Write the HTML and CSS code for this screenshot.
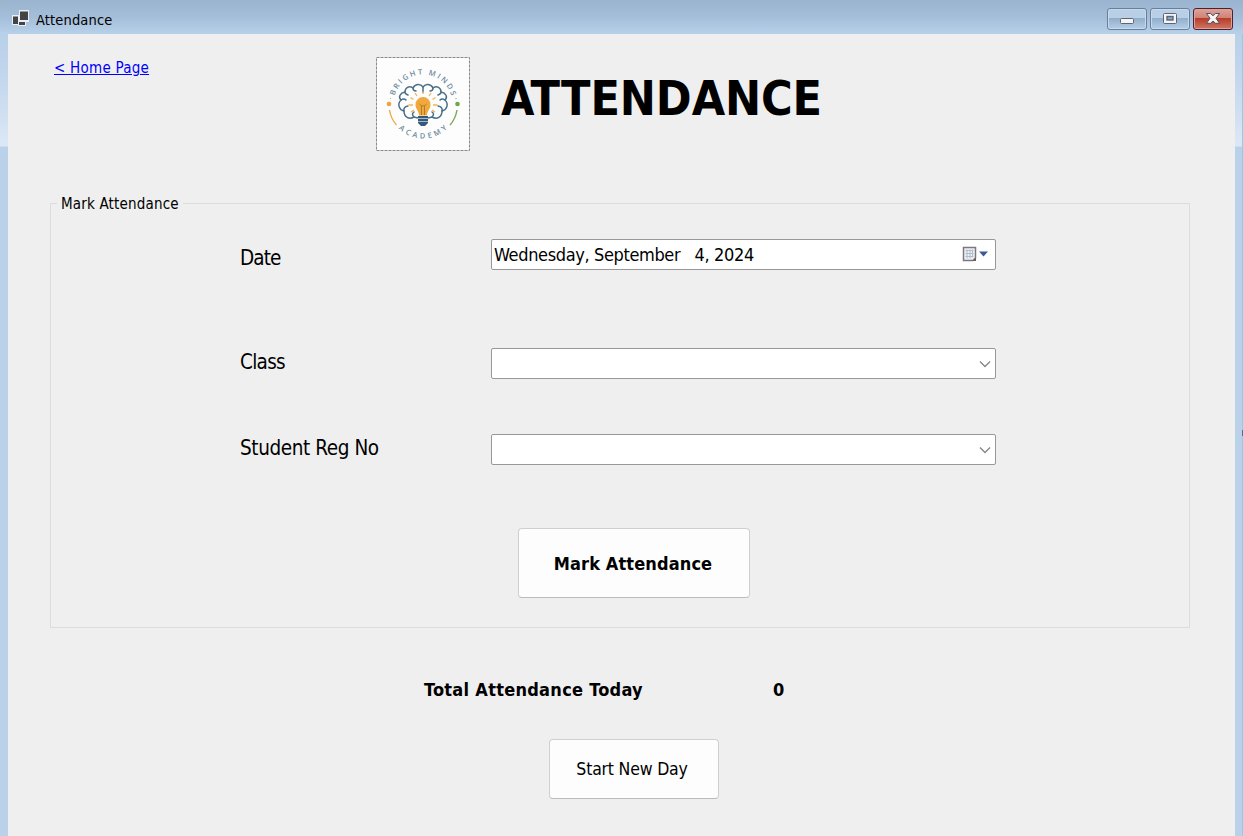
FILE: index.html
```html
<!DOCTYPE html>
<html lang="en">
<head>
<meta charset="utf-8">
<title>Attendance</title>
<link rel="stylesheet" href="styles.css">
</head>
<body>
<div class="window">
  <header class="titlebar">
    <svg class="app-icon" width="18" height="17" viewBox="0 0 18 17">
      <path d="M7 0h10v12h-3v4H6v-1H0V5h7z" fill="#e9eef4"/>
      <path d="M8 1.500h8v8.500H8zM1 6.500h5V14H1zM7 12h6v3H7z" fill="#444"/>
    </svg>
    <span class="title">Attendance</span>
    <div class="controls">
      <button class="control" aria-label="Minimize"><svg width="38" height="21" viewBox="0 0 38 21"><rect x="12.500" y="9.500" width="13" height="5" rx="1" fill="#f4f4f4" stroke="#5c6577"/></svg></button>
      <button class="control" aria-label="Maximize"><svg width="38" height="21" viewBox="0 0 38 21"><rect x="12.500" y="4.500" width="13" height="10" rx="1" fill="#f4f4f4" stroke="#5c6577"/><rect x="16" y="7.500" width="6" height="3.500" fill="#8ea9c6" stroke="#5c6577" stroke-width="1.400"/></svg></button>
      <button class="control close" aria-label="Close"><svg width="38" height="21" viewBox="0 0 38 21"><path d="M12.500 4.500h4l2.500 2.200 2.500-2.200h4L22 9.300l3.500 5h-4L19 12.100l-2.500 2.200h-4l3.500-5z" fill="#f4f4f4" stroke="#5b4b5c"/></svg></button>
    </div>
  </header>
  <main class="client">
    <div class="masthead">
      <a class="home" href="#">&lt; Home Page</a>
      <div class="logo">
        <svg width="94" height="94" viewBox="0 0 94 94">
          <rect x=".5" y=".5" width="93" height="93" fill="#fdfdfd" stroke="#888" stroke-dasharray="3 1"/>
          <defs>
            <path id="arcTop" d="M17.500 47a29.500 29.500 0 0 1 59 0"/>
            <path id="arcBottom" d="M12.500 47a34.500 34.500 0 0 0 69 0"/>
          </defs>
          <text class="logo-text"><textPath href="#arcTop" startOffset="50%" text-anchor="middle" textLength="76">BRIGHT MINDS</textPath></text>
          <text class="logo-text"><textPath href="#arcBottom" startOffset="50%" text-anchor="middle" textLength="54">ACADEMY</textPath></text>
          <circle cx="13" cy="47" r="2.300" fill="#eda53b"/><circle cx="81.500" cy="47" r="2.300" fill="#70a64e"/>
          <path d="M14.500 41v1" stroke="#eda53b"/><path d="M80 41v1" stroke="#70a64e"/>
          <path d="M13.500 53q1.500 9 7 15" fill="none" stroke="#edb04e" stroke-width="1.500"/>
          <path d="M81 53q-1.500 9-7 15" fill="none" stroke="#7dac60" stroke-width="1.500"/>
          <g fill="none" stroke="#4a7088" stroke-width="1.500" stroke-linecap="round">
            <path d="M47 30C44 26 39 27 37 31C33 28 29 31 29 35C24 36 22 40 25 43C21 47 23 53 28 54C28 60 33 63 38 60L42 61M47 30C50 26 55 27 57 31C61 28 65 31 65 35C70 36 72 40 69 43C73 47 71 53 66 54C66 60 61 63 56 60L52 61"/>
            <path d="M47 30v5M37 31q0 3 3 3M29 35q0 2 3 3M25 43q3-2 5 0M28 54q-1-4 4-5M38 60q-3-3 0-5M57 31q0 3-3 3M65 35q0 2-3 3M69 43q-3-2-5 0M66 54q1-4-4-5M56 60q3-3 0-5"/>
          </g>
          <path d="M47 40a7.500 7.500 0 0 0-7.500 7.500c0 5 3.500 6 3.500 11h8c0-5 3.500-6 3.500-11A7.500 7.500 0 0 0 47 40z" fill="#f0a93a"/>
          <path d="M47 37v-2.500M41 39l-2-3M53 39l2-3M37.500 42.500l-3-2M56.500 42.500l3-2M37 48h-4.500M57 48h4.500M38 53l-3 2M56 53l3 2" stroke="#f2b451" stroke-width="1.300"/>
          <path d="M43.500 47q3.500 4 7 0M45.500 49v9M48.500 49v9" fill="none" stroke="#ad7c2d"/>
          <path d="M42 59h10v7l-3 3h-4l-3-3z" fill="#35597a"/><path d="M42 61.500h10M42 64.500h10" stroke="#a7bdcc"/>
        </svg>
      </div>
      <h1 class="heading">ATTENDANCE</h1>
    </div>

    <fieldset class="group">
      <legend class="legend">Mark Attendance</legend>
      <div class="row row-date">
        <label class="label label-date">Date</label>
        <div class="field">
          <span class="date-text">Wednesday, September&nbsp;&nbsp; 4, 2024</span>
          <svg class="calendar" width="26" height="17" viewBox="0 0 26 17">
            <path d="M1.500 1.500h12v10.500l-2.500 2.500H1.500z" fill="#eef1f6" stroke="#81777a" stroke-width="1.500"/>
            <path d="M3.500 4.500h8M3.500 7.500h8M3.500 10.500h8M5 3.500v9M8 3.500v9M10.500 3.500v8" stroke="#aebbd0"/>
            <path d="M14 11.500V15h-3.500z" fill="#6b5c61"/>
            <path d="M17 5.500h9l-4.500 5z" fill="#3d5a97"/>
          </svg>
        </div>
      </div>
      <div class="row row-class">
        <label class="label">Class</label>
        <div class="field"><svg class="chevron" width="12" height="8" viewBox="0 0 12 8"><path d="M1 1.500l5 5 5-5" fill="none" stroke="#858585" stroke-width="1.300"/></svg></div>
      </div>
      <div class="row row-student">
        <label class="label label-student">Student Reg No</label>
        <div class="field"><svg class="chevron" width="12" height="8" viewBox="0 0 12 8"><path d="M1 1.500l5 5 5-5" fill="none" stroke="#858585" stroke-width="1.300"/></svg></div>
      </div>
      <button class="button mark"><span>Mark Attendance</span></button>
    </fieldset>

    <div class="total">
      <span class="total-label">Total Attendance Today</span>
      <span class="total-value">0</span>
    </div>
    <button class="button new-day"><span>Start New Day</span></button>
  </main>
  <i class="edge-mark"></i>
</div>
</body>
</html>
```
FILE: styles.css
```css
* { box-sizing: border-box; }
body {
  margin: 0;
  overflow: hidden;
  font-family: "DejaVu Sans Condensed", "DejaVu Sans", sans-serif;
  font-stretch: condensed;
  color: #000;
}
.window {
  position: relative;
  width: 1243px;
  height: 836px;
  padding: 0 8px;
  background:
    linear-gradient(#85d2f0, #85d2f0) right / 1px 100% no-repeat,
    linear-gradient(#9bb5d1 0, #b8d0e9 34px, #c3d7ee 80px, #dce8f5 146px, #bad1ea 147px);
}
.titlebar {
  display: flex;
  height: 34px;
  margin: 0 -8px;
  padding: 0 10px 0 12px;
  background: linear-gradient(#9ab4d0, #a4bdd8 50%, #b8d1eb);
}
.app-icon { margin-top: 10px; }
.title { margin-left: 6px; font-size: 14.5px; line-height: 40px; letter-spacing: 0.15px; }
.controls { display: flex; gap: 3px; margin: 8px 0 0 auto; }
.control {
  width: 40px;
  height: 22px;
  padding: 0;
  border: 1px solid #687f9b;
  border-radius: 3px;
  background: linear-gradient(#b9cfe6 0 45%, #91aecb 46%, #b5cee7);
  box-shadow: inset 0 0 0 1px #c9daec;
}
.control svg { display: block; }
.close {
  border-color: #521f30;
  background: linear-gradient(#dda398 0, #cf8274 45%, #b63c27 46%, #cf7664);
  box-shadow: inset 0 0 0 1px #dfa197;
}
.client {
  display: flex;
  flex-direction: column;
  height: 802px;
  background: #efefef;
}
.masthead { display: flex; height: 161px; padding-left: 46px; }
.home {
  width: 322px;
  margin-top: 25px;
  font-size: 15px;
  line-height: 18px;
  letter-spacing: 0.25px;
  color: #00f;
}
.logo { width: 94px; height: 94px; margin-top: 23px; }
.logo svg { display: block; }
.logo-text { font: 600 7.5px "Open Sans", sans-serif; fill: #6d8b9e; }
.heading {
  margin: 34px 0 0 31px;
  font-size: 48px;
  line-height: 60px;
  font-weight: bold;
  letter-spacing: -0.1px;
  white-space: nowrap;
}
.group {
  display: flex;
  flex-direction: column;
  width: 1140px;
  height: 433px;
  margin: 0 0 0 42px;
  padding: 0 0 0 189px;
  border: 1px solid #dcdcdc;
}
.legend {
  height: 17px;
  margin-left: -183px;
  padding: 0 4px;
  font-size: 15px;
  line-height: 19px;
  letter-spacing: 0.18px;
}
.row { display: flex; height: 31px; }
.row-date { margin-top: 27px; }
.row-class { margin-top: 78px; }
.row-student { margin-top: 55px; }
.label { width: 251px; font-size: 20.5px; line-height: 28px; letter-spacing: -0.7px; white-space: nowrap; }
.label-student { letter-spacing: -0.4px; }
.label-date { line-height: 38px; letter-spacing: -0.9px; }
.field {
  display: flex;
  align-items: center;
  width: 505px;
  height: 31px;
  border: 1px solid #989898;
  border-radius: 2px;
  background: #fff;
}
.date-text { margin-left: 2px; font-size: 18px; letter-spacing: -0.36px; white-space: nowrap; }
.calendar { margin: 0 7px 0 auto; }
.chevron { margin: 0 4px 0 auto; }
.button {
  padding: 0;
  border: 1px solid #cfcfcf;
  border-bottom-color: #bbb;
  border-radius: 4px;
  background: #fdfdfd;
  color: #000;
  font-family: inherit;
  font-stretch: inherit;
}
.mark { width: 232px; height: 70px; margin: 63px 0 0 278px; padding-right: 2px; font-size: 18px; font-weight: bold; letter-spacing: 0.12px; }
.total { display: flex; margin: 50px 0 0 416px; font-size: 18px; line-height: 24px; font-weight: bold; letter-spacing: 0.28px; }
.total-label { width: 349px; white-space: nowrap; }
.new-day { width: 170px; height: 60px; margin: 37px 0 0 541px; padding-right: 4px; font-size: 17.5px; letter-spacing: -0.2px; }
.edge-mark { position: absolute; right: 0; top: 430px; width: 1px; height: 6px; background: #668; }
```
